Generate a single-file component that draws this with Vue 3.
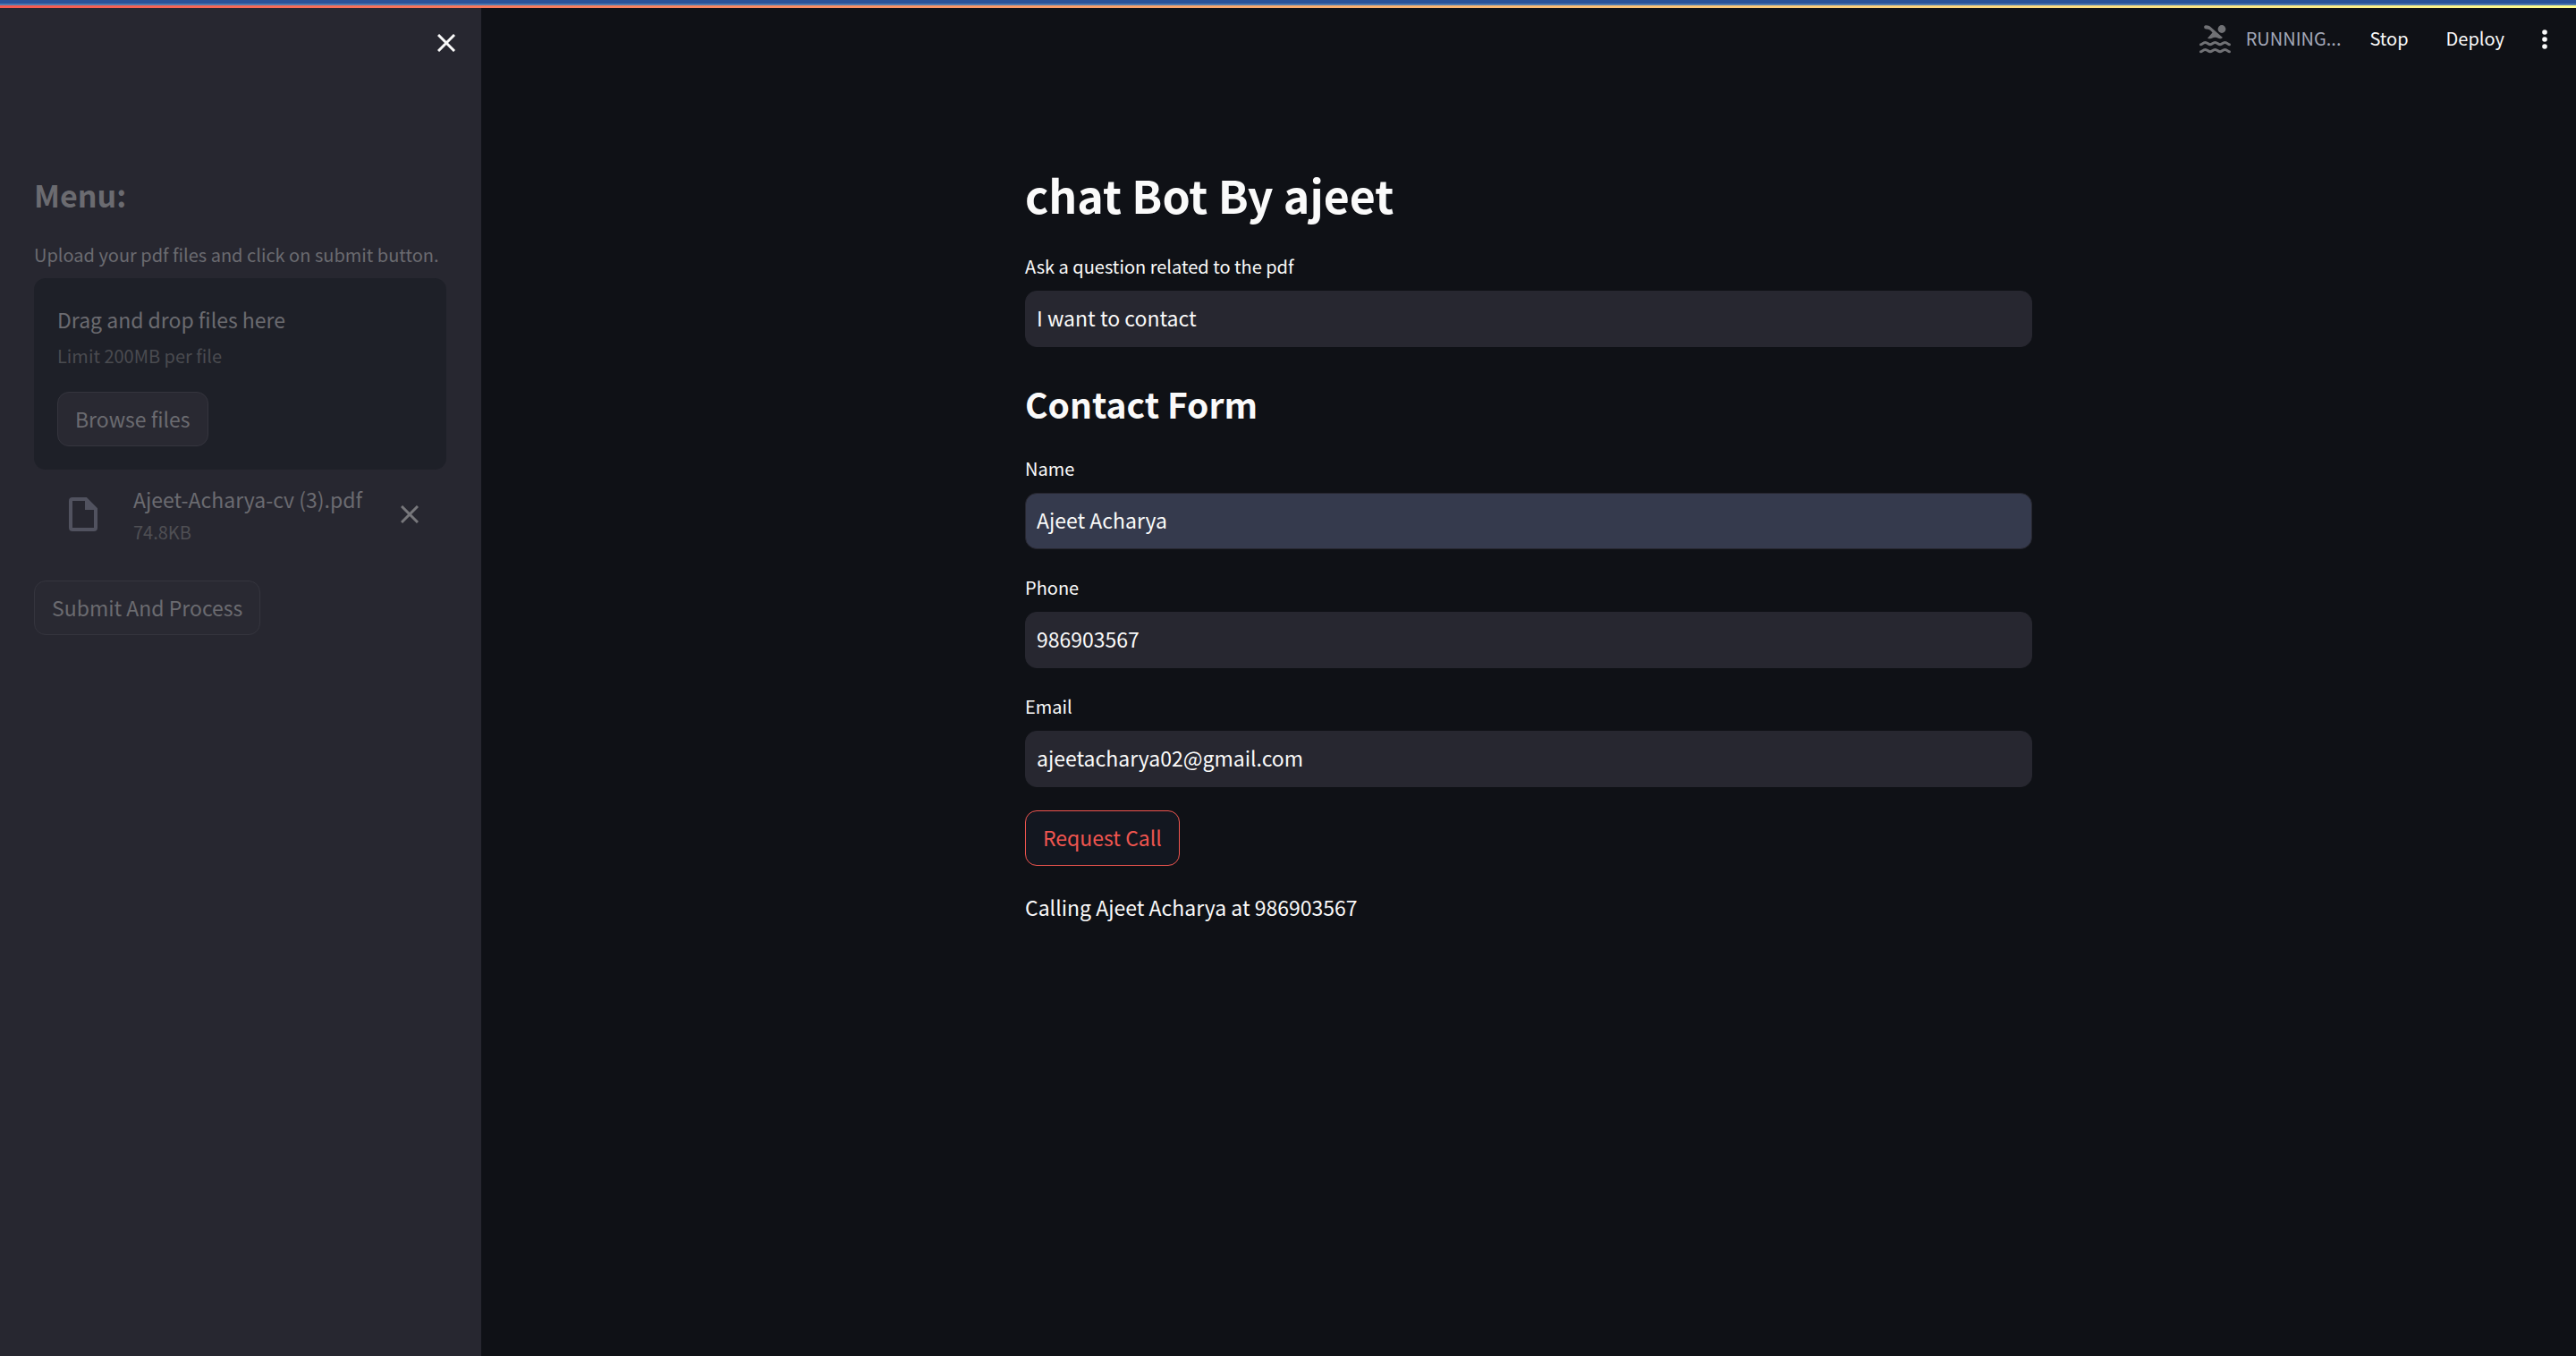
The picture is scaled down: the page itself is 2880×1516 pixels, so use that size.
<script setup>
import { ref } from 'vue'

const question = ref('I want to contact')
const name = ref('Ajeet Acharya')
const phone = ref('986903567')
const email = ref('ajeetacharya02@gmail.com')
</script>

<template>
  <div class="app">
    <div class="decoration"></div>
    <aside class="sidebar">
      <div class="sidebar-top">
        <button class="icon-button" type="button" aria-label="Close sidebar">
          <svg class="cross" viewBox="0 0 20 20"><path d="M1 1L19 19M19 1L1 19" /></svg>
        </button>
      </div>
      <div class="sidebar-body">
        <h2 class="menu-title">Menu:</h2>
        <label class="upload-label" for="browse">Upload your pdf files and click on submit button.</label>
        <section class="dropzone">
          <span class="drop-title">Drag and drop files here</span>
          <span class="drop-limit">Limit 200MB per file</span>
          <button id="browse" class="button browse" type="button">Browse files</button>
        </section>
        <div class="file">
          <svg class="file-icon" viewBox="0 0 32 38">
            <path class="file-outline" d="M4 2H19L30 13V34Q30 36 28 36H4Q2 36 2 34V4Q2 2 4 2Z" />
            <path class="file-fold" d="M18 1H20L31 12V14H18Z" />
          </svg>
          <div class="file-text">
            <span class="file-name">Ajeet-Acharya-cv (3).pdf</span>
            <small class="file-size">74.8KB</small>
          </div>
          <button class="icon-button remove" type="button" aria-label="Remove file">
            <svg class="cross" viewBox="0 0 20 20"><path d="M1 1L19 19M19 1L1 19" /></svg>
          </button>
        </div>
        <button class="button submit" type="button">Submit And Process</button>
      </div>
    </aside>

    <div class="content">
      <header class="toolbar">
        <svg class="swimmer" viewBox="0 0 35 32">
          <circle cx="25" cy="4.500" r="4.400" />
          <path d="M7 0.300C10.500 0.300 12 1.500 13.500 3L26 14C25 15 24 15.300 23 15.300C21 15.300 20 13.700 17.500 13.700S14 15.300 12 15.300C11 15.300 10 15 9 14.700L14.500 8.500C12.500 6 11 4.800 7.500 4.600C4.500 4.400 4.500 0.400 7 0.300Z" />
          <path class="wave" d="M1.500 21.800C3 21.800 4 19.500 6.500 19.500S10 21.800 12 21.800S15 19.500 17.500 19.500S21 21.800 23 21.800S26 19.500 28.500 19.500S32 21.800 33.500 21.800" />
          <path class="wave" d="M1.500 29.800C3 29.800 4 27.500 6.500 27.500S10 29.800 12 29.800S15 27.500 17.500 27.500S21 29.800 23 29.800S26 27.500 28.500 27.500S32 29.800 33.500 29.800" />
        </svg>
        <span class="status">RUNNING...</span>
        <button class="tool stop" type="button">Stop</button>
        <button class="tool deploy" type="button">Deploy</button>
        <button class="icon-button" type="button" aria-label="Main menu">
          <svg class="dots" viewBox="0 0 6 22">
            <circle cx="3" cy="3" r="2.800" /><circle cx="3" cy="11" r="2.800" /><circle cx="3" cy="19" r="2.800" />
          </svg>
        </button>
      </header>

      <main class="page">
        <h1>chat Bot By ajeet</h1>
        <div class="field">
          <label for="question">Ask a question related to the pdf</label>
          <input id="question" v-model="question" type="text" />
        </div>
        <h2>Contact Form</h2>
        <div class="field">
          <label for="name">Name</label>
          <input id="name" v-model="name" class="filled" type="text" />
        </div>
        <div class="field">
          <label for="phone">Phone</label>
          <input id="phone" v-model="phone" type="text" />
        </div>
        <div class="field">
          <label for="email">Email</label>
          <input id="email" v-model="email" type="text" />
        </div>
        <button class="button request" type="button">Request Call</button>
        <p>Calling {{ name }} at {{ phone }}</p>
      </main>
    </div>
  </div>
</template>

<style>
body {
  margin: 0;
  background: #0f1116;
}
</style>

<style scoped>
.app {
  display: grid;
  grid-template-columns: 538px 1fr;
  grid-template-rows: 9px 1fr;
  min-height: 100vh;
  color: #fafafa;
  background: #0f1116;
  font-family: "Noto Sans CJK SC", "Noto Sans", sans-serif;
  font-size: 23px;
  line-height: 41px;
}

.app * {
  box-sizing: border-box;
}

.decoration {
  grid-column: 1 / -1;
  border-top: 4px solid #2a5298;
  background: linear-gradient(#4f79ae, #4f79ae) 0 0 / 100% 2px no-repeat,
    linear-gradient(90deg, #f55a50, #fffd8c);
}

.sidebar {
  background: #272730;
}

.sidebar-top {
  display: flex;
  justify-content: flex-end;
  padding: 29px 29px 0;
}

.sidebar-body {
  display: flex;
  flex-direction: column;
  align-items: flex-start;
  padding: 137px 39px 0 38px;
}

h1,
h2,
p {
  margin: 0;
}

.menu-title {
  color: #6b6b70;
  font-size: 34px;
  font-weight: 700;
  line-height: 46px;
}

.upload-label {
  margin-top: 26px;
  color: #6b6b70;
  font-size: 20px;
  line-height: 36px;
  white-space: nowrap;
}

.dropzone {
  display: flex;
  flex-direction: column;
  align-items: flex-start;
  align-self: stretch;
  margin-top: 8px;
  padding: 26px;
  border-radius: 13px;
  background: #1e2028;
}

.drop-title,
.file-name {
  color: #6b6b70;
}

.drop-limit {
  color: #4a4b50;
  font-size: 20px;
  line-height: 40px;
}

.button {
  height: 61px;
  padding: 0 19px 1px;
  border: 1px solid #35353e;
  border-radius: 13px;
  color: #6b6b70;
  background: #292932;
  font: inherit;
}

.browse {
  margin-top: 20px;
}

.file {
  display: flex;
  align-items: center;
  align-self: stretch;
  margin-top: 13px;
  padding: 0 31px 0 39px;
}

.file-icon {
  width: 32px;
  height: 38px;
}

.file-outline {
  fill: none;
  stroke: #51525f;
  stroke-width: 4;
}

.file-fold {
  fill: #51525f;
}

.file-text {
  display: flex;
  flex: 1;
  flex-direction: column;
  margin-left: 40px;
}

.file-size {
  color: #4f4f54;
  font-size: 20px;
  line-height: 32px;
}

.submit {
  margin-top: 38px;
}

.icon-button {
  display: flex;
  align-items: center;
  justify-content: center;
  padding: 0;
  border: 0;
  color: inherit;
  background: none;
}

.cross {
  width: 20px;
  height: 20px;
  fill: none;
  stroke: currentColor;
  stroke-width: 3;
}

.remove {
  color: #77777b;
}

.toolbar {
  display: flex;
  align-items: center;
  justify-content: flex-end;
  height: 70px;
  padding-right: 32px;
  font-size: 20px;
}

.swimmer {
  width: 35px;
  height: 32px;
  fill: #707175;
}

.wave {
  fill: none;
  stroke: #707175;
  stroke-linecap: round;
  stroke-width: 3;
}

.status,
.tool {
  padding: 0 0 3px;
}

.status {
  margin-left: 17px;
  color: #a3a8b8;
}

.tool {
  border: 0;
  color: inherit;
  background: none;
  font: inherit;
}

.stop {
  margin-left: 32px;
}

.deploy {
  margin: 0 42px;
}

.dots {
  width: 6px;
  height: 22px;
  fill: currentColor;
}

.page {
  display: flex;
  flex-direction: column;
  align-items: flex-start;
  gap: 26px;
  width: 100%;
  max-width: 1126px;
  margin: 0 auto;
  padding-top: 104px;
}

h1 {
  padding-bottom: 3px;
  font-size: 50px;
  font-weight: 700;
  line-height: 69px;
}

h2 {
  font-size: 39px;
  font-weight: 700;
}

.page h2 {
  padding: 13px 0 6px;
  line-height: 48px;
}

.field {
  display: flex;
  flex-direction: column;
  align-self: stretch;
  gap: 10px;
}

.field label {
  font-size: 20px;
  line-height: 34px;
}

.field input {
  width: 100%;
  height: 63px;
  padding: 0 12px 4px;
  border: 1px solid #272730;
  border-radius: 13px;
  color: inherit;
  background: #272730;
  font: inherit;
}

.field .filled {
  background: #353a4d;
}

.request {
  height: 62px;
  border-color: #f0554f;
  color: #f0554f;
  background: #131720;
}
</style>
